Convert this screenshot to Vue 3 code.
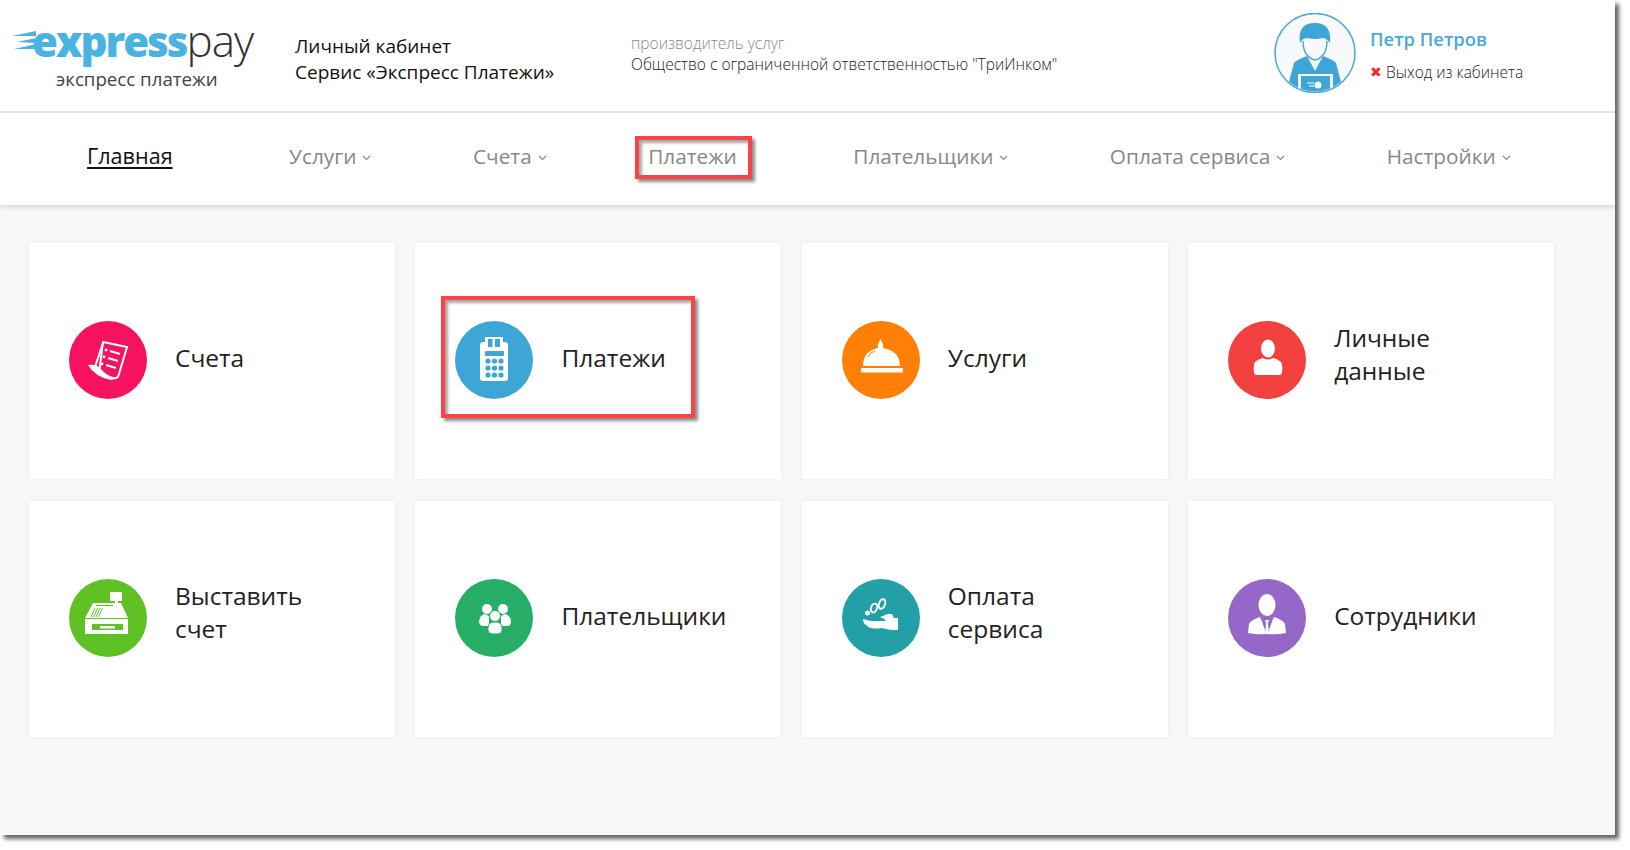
<script setup>
const navItems = [
  { label: 'Главная', active: true },
  { label: 'Услуги', caret: true },
  { label: 'Счета', caret: true },
  { label: 'Платежи', marked: true },
  { label: 'Плательщики', caret: true },
  { label: 'Оплата сервиса', caret: true },
  { label: 'Настройки', caret: true },
]

const cards = [
  { lines: ['Счета'], tone: 'pink', svg: `<path d="M34 21 58 26 50 53Q49 58 44 57L30 53 Z" fill="none" stroke="#fff" stroke-width="2"/><path d="M19 44Q28 43 32 48T46 58L42 59Q26 56 19 44Z" fill="#fff"/><path d="M34 22 26 46" stroke="#fff" stroke-width="2"/><g fill="#fff"><circle cx="37" cy="29" r="1.4"/><circle cx="35" cy="36" r="1.4"/><circle cx="33" cy="43" r="1.4"/></g><g stroke="#fff" stroke-width="2.2"><path d="M41 30 51 33M39 37 49 40M37 44 47 47"/></g>` },
  { lines: ['Платежи'], tone: 'blue', marked: true, svg: `<path d="M30 16H48V21H50Q53 21 53 25V57Q53 60 50 60H28Q25 60 25 57V25Q25 21 28 21H30Z" fill="#fff"/><g fill="#3ea6d6"><rect x="33" y="18" width="4.500" height="8"/><rect x="40" y="18" width="5" height="8"/><rect x="30" y="30" width="19" height="5" rx="1"/><circle cx="33" cy="40" r="2.600"/><circle cx="39.500" cy="40" r="2.600"/><circle cx="46" cy="40" r="2.600"/><circle cx="33" cy="47" r="2.600"/><circle cx="39.500" cy="47" r="2.600"/><circle cx="46" cy="47" r="2.600"/><circle cx="33" cy="54" r="2.600"/><circle cx="39.500" cy="54" r="2.600"/><circle cx="46" cy="54" r="2.600"/></g>` },
  { lines: ['Услуги'], tone: 'orange', svg: `<path d="M21 45Q21 30 36 27Q35 24 37 21L38.500 18 40 21Q42 24 41 27Q58 30 58 45Z" fill="#fff"/><rect x="19" y="47" width="42" height="4.500" rx="1" fill="#fff"/><path d="M26 36Q28 31 33 30" fill="none" stroke="#ff7f07" stroke-width="1"/>` },
  { lines: ['Личные', 'данные'], tone: 'red', svg: `<ellipse cx="40" cy="27.500" rx="7" ry="9" fill="#fff"/><path d="M27 41Q30 38 35 37Q40 40 45 37Q50 38 53 41Q55 44 54 51Q54 54 51 54H29Q26 54 26 51Q25 44 27 41Z" fill="#fff"/>` },
  { lines: ['Выставить', 'счет'], tone: 'green', svg: `<path d="M41 13H53V22H49V24H52L59 39H16L24 24H46V22H41Z" fill="#fff"/><rect x="27" y="26" width="17" height="1" fill="#5fc124"/><path d="M26 29 22 38M28.500 29 24.500 38M31 29 27 38M33.500 29 29.500 38" stroke="#5fc124" stroke-width="1"/><path d="M16 40H59V55H16Z" fill="#fff"/><rect x="23" y="45" width="31" height="6" fill="#5fc124"/><rect x="31" y="47" width="15" height="2.500" fill="#fff"/>` },
  { lines: ['Плательщики'], tone: 'emerald', svg: `<g fill="#fff"><circle cx="32" cy="30" r="5"/><circle cx="48" cy="30" r="5"/><path d="M24 42Q25 36 30 35L34 37V47H28Q24 47 24 42Z"/><path d="M56 42Q55 36 50 35L46 37V47H52Q56 47 56 42Z"/><circle cx="40" cy="37" r="5.500" stroke="#27ae66" stroke-width="1"/><path d="M33 52Q32 44 38 43H42Q48 44 47 52Q46 55 43 55H37Q34 55 33 52Z" stroke="#27ae66" stroke-width="1"/></g>` },
  { lines: ['Оплата', 'сервиса'], tone: 'teal', svg: `<path d="M21 40Q30 43 37 42H44Q42 39 38 38L46 35H50L52 39H56V51H52Q46 51 40 49Q28 51 24 46Q21 44 21 40Z" fill="#fff"/><g fill="none" stroke="#fff" stroke-width="2"><ellipse cx="40" cy="25" rx="3" ry="5" transform="rotate(20 40 25)"/><ellipse cx="32" cy="29" rx="3" ry="4.500" transform="rotate(20 32 29)"/></g><circle cx="25.500" cy="34" r="2.500" fill="#fff"/>` },
  { lines: ['Сотрудники'], tone: 'purple', svg: `<ellipse cx="39" cy="26" rx="8.500" ry="11" fill="#fff"/><path d="M21 45Q23 41 32 38L37 51H34ZM57 45Q55 41 46 38L41 51H44Z" fill="#fff"/><path d="M21 45L20 54Q30 56 38 55L33 40ZM57 45L58 54Q48 56 40 55L45 40Z" fill="#fff"/><path d="M37 41H41L40 44 41 55H37L38 44Z" fill="#fff"/>` },
]
</script>

<template>
  <div class="page">
    <div class="window">
      <header class="topbar">
        <div class="logo">
          <div class="logo-mark">
            <svg class="streaks" width="24" height="24" viewBox="0 0 24 24">
              <path d="M0 6 24 1V6ZM5 12 24 8V13ZM2 19 24 14V19Z" fill="#4ab3e2" />
            </svg>
            <span class="logo-express">express</span><span class="logo-pay">pay</span>
          </div>
          <div class="logo-sub">экспресс платежи</div>
        </div>
        <div class="cabinet">
          <div>Личный кабинет</div>
          <div>Сервис «Экспресс Платежи»</div>
        </div>
        <div class="provider">
          <div class="provider-caption">производитель услуг</div>
          <div>Общество с ограниченной ответственностью "ТриИнком"</div>
        </div>
        <svg class="avatar" width="82" height="80" viewBox="0 0 82 80">
          <defs>
            <clipPath id="avatar-clip"><ellipse cx="41" cy="40" rx="39" ry="38.500" /></clipPath>
          </defs>
          <ellipse cx="41" cy="40" rx="40" ry="39.500" fill="#f7f9fa" stroke="#4aa8d8" stroke-width="1.500" />
          <g clip-path="url(#avatar-clip)">
            <path d="M26 30Q23 10 41 10Q58 10 56 30Q52 25 49 25Q41 27 33 25Q29 25 26 30Z" fill="#3ea6d6" />
            <path d="M29 28Q29 44 41 47Q53 44 53 28" fill="none" stroke="#3ea6d6" stroke-width="1.400" />
            <path d="M12 80L20 50Q22 47 33 43L41 58 49 43Q60 47 62 50L70 80Z" fill="#3ea6d6" />
            <rect x="23" y="60" width="37" height="24" fill="#f7f9fa" stroke="#3ea6d6" stroke-width="2" />
            <rect x="27" y="63" width="29" height="18" fill="#3ea6d6" />
            <circle cx="44" cy="72" r="3.500" fill="#fff" />
            <path d="M33 70H40M35 73H40" stroke="#fff" stroke-width="1" />
          </g>
        </svg>
        <div class="user">
          <div class="user-name">Петр Петров</div>
          <div class="user-exit"><span class="cross">✖</span>Выход из кабинета</div>
        </div>
      </header>

      <nav class="menu">
        <a
          v-for="item in navItems"
          :key="item.label"
          class="menu-item"
          :class="{ active: item.active, plain: !item.caret }"
        >
          <span class="menu-label">{{ item.label }}</span>
          <svg v-if="item.caret" class="caret" width="9" height="6" viewBox="0 0 9 6">
            <path d="M1 1 4.500 4.500 8 1" fill="none" stroke="#888" stroke-width="1.100" />
          </svg>
          <span v-if="item.marked" class="mark mark-nav"></span>
        </a>
      </nav>

      <main class="tiles">
        <div v-for="card in cards" :key="card.lines[0]" class="tile">
          <div class="tile-body">
            <span v-if="card.marked" class="mark mark-tile"></span>
            <svg class="disc" :class="card.tone" width="78" height="78" viewBox="0 0 78 78" v-html="card.svg"></svg>
            <div class="tile-label" :class="{ double: card.lines.length > 1 }">
              <div v-for="line in card.lines" :key="line">{{ line }}</div>
            </div>
          </div>
        </div>
      </main>
    </div>
  </div>
</template>

<style>
html, body { margin: 0; background: #fff; }
</style>

<style scoped>
.page {
  width: 1630px;
  height: 850px;
  overflow: hidden;
  background: #fff;
  font-family: "Open Sans", "Noto Sans", sans-serif;
}
.window {
  width: 1615px;
  height: 835px;
  background: #f7f7f7;
  box-shadow: 4px 4px 4px rgba(0, 0, 0, 0.6);
  overflow: hidden;
}
.topbar {
  display: flex;
  align-items: flex-start;
  height: 111px;
  background: #fff;
  border-bottom: 2px solid #e6e6e6;
  color: #111;
}
.logo { width: 241px; margin-left: 12px; margin-top: 15px; flex: none; }
.logo-mark { display: flex; align-items: baseline; height: 50px; line-height: 50px; }
.streaks { margin-right: -4px; flex: none; align-self: center; margin-top: 3px; }
.logo-express {
  font-size: 42px;
  font-weight: 800;
  color: #4ab3e2;
  letter-spacing: -2px;
}
.logo-pay {
  font-size: 44px;
  font-weight: 300;
  color: #333;
  letter-spacing: -1px;
}
.logo-sub {
  margin-left: 44px;
  font-size: 18.700px;
  line-height: 22px;
  color: #444;
  margin-top: 3px;
}
.cabinet {
  margin-left: 42px;
  margin-top: 33px;
  width: 336px;
  flex: none;
  font-size: 19px;
  line-height: 26px;
}
.provider {
  width: 644px;
  flex: none;
  margin-top: 33px;
  font-size: 15.550px;
  font-weight: 300;
  line-height: 21px;
  color: #222;
}
.provider-caption { color: #888; }
.avatar { margin-top: 13px; flex: none; margin-left: -1px; }
.user { margin-left: 14px; margin-top: 26px; }
.user-name { font-size: 18.400px; font-weight: 600; line-height: 26px; color: #4aa8d8; }
.user-exit {
  margin-top: 10px;
  font-size: 15.500px;
  font-weight: 300;
  line-height: 20px;
  color: #222;
  display: flex;
  align-items: center;
}
.cross { color: #f02c2c; font-size: 14px; width: 16px; flex: none; }

.menu {
  display: flex;
  align-items: center;
  gap: 101.500px;
  height: 86px;
  padding-bottom: 6px;
  padding-left: 87px;
  background: #fff;
  box-shadow: 0 3px 4px rgba(0, 0, 0, 0.1);
  position: relative;
  font-size: 20.800px;
  color: #888;
}
.menu-item { display: flex; align-items: center; position: relative; line-height: 30px; }
.menu-item.plain { margin-right: 15px; }
.menu-item.active { color: #111; font-size: 21.600px; font-weight: 500; text-decoration: underline; text-underline-offset: 3px; }
.caret { margin-left: 6px; margin-top: 4px; flex: none; }

.tiles {
  display: grid;
  grid-template-columns: repeat(4, 366px);
  grid-auto-rows: 236px;
  gap: 22px 20.400px;
  padding: 38px 0 0 29px;
}
.tile {
  background: #fff;
  box-shadow: 0 0 4px rgba(0, 0, 0, 0.05);
}
.tile-body {
  position: relative;
  display: flex;
  align-items: center;
  gap: 28px;
  padding: 78px 0 0 40px;
}
.disc { flex: none; border-radius: 50%; }
.pink { background: #f5135f; }
.blue { background: #3ea6d6; }
.orange { background: #ff7f07; }
.red { background: #f2403f; }
.green { background: #5fc124; }
.emerald { background: #27ae66; }
.teal { background: #22a0a6; }
.purple { background: #9467c9; }
.tile-label {
  font-size: 24.500px;
  line-height: 33px;
  color: #222;
  margin-top: -5px;
}
.tile-label.double { margin-top: -12px; }
.mark {
  position: absolute;
  box-sizing: border-box;
  border: 4px solid #fb4244;
  box-shadow: 3px 3px 3px rgba(0, 0, 0, 0.45), inset 3px 3px 3px rgba(0, 0, 0, 0.35);
}
.mark-nav { left: -13px; top: -5px; width: 117px; height: 43px; }
.mark-tile { left: 26px; top: 53px; width: 254px; height: 122px; }
</style>
